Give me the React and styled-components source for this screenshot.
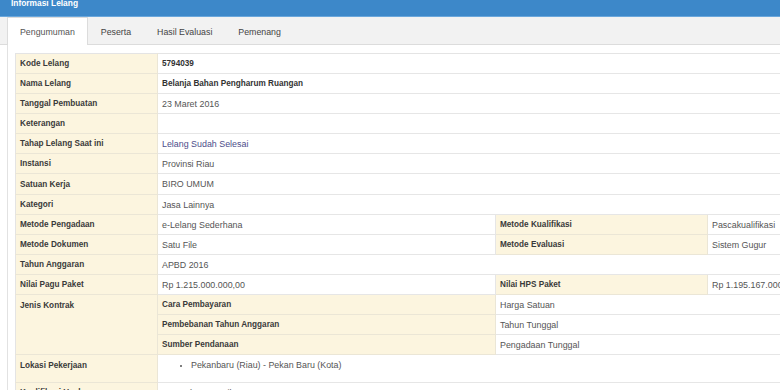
import styled, { createGlobalStyle } from "styled-components";

const GlobalStyle = createGlobalStyle`
  html, body {
    margin: 0;
    padding: 0;
    background: #fff;
    overflow: hidden;
  }
  body {
    font-family: "Liberation Sans", Arial, sans-serif;
    width: 780px;
    height: 390px;
  }
`;

const Panel = styled.div`
  width: 780px;
  height: 390px;
  overflow: hidden;
  display: flex;
  flex-direction: column;
`;

const Header = styled.div`
  height: 16px;
  flex: 0 0 16px;
  background: #3d88c9;
  border-bottom: 1px solid #6aa7dc;
  padding-left: 11px;
  display: flex;
  align-items: flex-start;
`;

const HeaderTitle = styled.span`
  color: #fff;
  font-weight: bold;
  font-size: 8.4px;
  line-height: 8px;
  margin-top: -1px;
`;

const TabBar = styled.div`
  display: flex;
  align-items: flex-end;
  height: 27px;
  flex: 0 0 27px;
  padding-left: 7px;
  background: #f2f2f2;
  border-bottom: 1px solid #dcdcdc;
`;

const Tab = styled.div`
  padding: 0 12px;
  display: flex;
  align-items: center;
  font-size: 8.8px;
  color: ${(p) => (p.$active ? "#555" : "#444")};
  background: ${(p) => (p.$active ? "#fff" : "transparent")};
  border: 1px solid ${(p) => (p.$active ? "#dcdcdc" : "transparent")};
  border-bottom: none;
  margin-bottom: -1px;
  height: ${(p) => (p.$active ? "27px" : "26px")};
`;

const Content = styled.div`
  flex: 1;
  margin-left: 7px;
  border-left: 1px solid #e2e2e2;
  padding: 8px 0 0 7px;
`;

const Table = styled.table`
  border-collapse: collapse;
  table-layout: fixed;
  width: 900px;
  border-top: 1px solid #e4e4e4;
  border-left: 1px solid #e4e4e4;
`;

const Row = styled.tr`
  height: ${(p) => p.$h || 20}px;
`;

const Label = styled.td`
  background: #fcf5df;
  color: #3a3a3a;
  font-weight: bold;
  font-size: 8.2px;
  padding: ${(p) => (p.$top ? "6px 4px 0" : "0 4px")};
  vertical-align: ${(p) => (p.$top ? "top" : "middle")};
  border-bottom: 1px solid #ebe6d6;
  border-right: 1px solid #ebe6d6;
  white-space: nowrap;
`;

const Value = styled.td`
  background: #fff;
  color: ${(p) => (p.$link ? "#4d4d8a" : p.$bold ? "#333" : "#555")};
  font-weight: ${(p) => (p.$bold ? "bold" : "normal")};
  font-size: ${(p) => (p.$bold ? "8.2px" : "8.9px")};
  padding: ${(p) => (p.$top ? "5px 4px 0" : "0 4px")};
  vertical-align: ${(p) => (p.$top ? "top" : "middle")};
  border-bottom: 1px solid #e6e6e6;
  border-right: 1px solid #e6e6e6;
  white-space: nowrap;
`;

const Locations = styled.ul`
  margin: 0;
  padding-left: 29px;
  list-style: disc;

  li::marker {
    font-size: 7px;
  }
`;

const tabs = ["Pengumuman", "Peserta", "Hasil Evaluasi", "Pemenang"];

const simpleRows = [
  ["Kode Lelang", "5794039", { bold: true }],
  ["Nama Lelang", "Belanja Bahan Pengharum Ruangan", { bold: true }],
  ["Tanggal Pembuatan", "23 Maret 2016"],
  ["Keterangan", ""],
  ["Tahap Lelang Saat ini", "Lelang Sudah Selesai", { link: true }],
  ["Instansi", "Provinsi Riau"],
  ["Satuan Kerja", "BIRO UMUM", { h: 21 }],
  ["Kategori", "Jasa Lainnya"],
];

const kontrak = [
  ["Cara Pembayaran", "Harga Satuan"],
  ["Pembebanan Tahun Anggaran", "Tahun Tunggal"],
  ["Sumber Pendanaan", "Pengadaan Tunggal"],
];

const App = () => {
  return (
    <>
      <GlobalStyle />
      <Panel>
        <Header>
          <HeaderTitle>Informasi Lelang</HeaderTitle>
        </Header>
        <TabBar>
          {tabs.map((t, i) => (
            <Tab key={t} $active={i === 0}>
              {t}
            </Tab>
          ))}
        </TabBar>
        <Content>
          <Table>
            <colgroup>
              <col style={{ width: 142 }} />
              <col style={{ width: 338 }} />
              <col style={{ width: 212 }} />
              <col style={{ width: 208 }} />
            </colgroup>
            <tbody>
              {simpleRows.map(([label, value, opt = {}]) => (
                <Row key={label} $h={opt.h}>
                  <Label>{label}</Label>
                  <Value colSpan={3} $bold={opt.bold} $link={opt.link}>
                    {value}
                  </Value>
                </Row>
              ))}
              <Row>
                <Label>Metode Pengadaan</Label>
                <Value>e-Lelang Sederhana</Value>
                <Label>Metode Kualifikasi</Label>
                <Value>Pascakualifikasi</Value>
              </Row>
              <Row>
                <Label>Metode Dokumen</Label>
                <Value>Satu File</Value>
                <Label>Metode Evaluasi</Label>
                <Value>Sistem Gugur</Value>
              </Row>
              <Row>
                <Label>Tahun Anggaran</Label>
                <Value colSpan={3}>APBD 2016</Value>
              </Row>
              <Row>
                <Label>Nilai Pagu Paket</Label>
                <Value>Rp 1.215.000.000,00</Value>
                <Label>Nilai HPS Paket</Label>
                <Value>Rp 1.195.167.000,00</Value>
              </Row>
              {kontrak.map(([label, value], i) => (
                <Row key={label}>
                  {i === 0 && (
                    <Label rowSpan={3} $top>
                      Jenis Kontrak
                    </Label>
                  )}
                  <Label>{label}</Label>
                  <Value colSpan={2}>{value}</Value>
                </Row>
              ))}
              <Row $h={28}>
                <Label $top>Lokasi Pekerjaan</Label>
                <Value colSpan={3} $top>
                  <Locations>
                    <li>Pekanbaru (Riau) - Pekan Baru (Kota)</li>
                  </Locations>
                </Value>
              </Row>
              <Row>
                <Label>Kualifikasi Usaha</Label>
                <Value colSpan={3}>Perusahaan Kecil</Value>
              </Row>
            </tbody>
          </Table>
        </Content>
      </Panel>
    </>
  );
};

export default App;
